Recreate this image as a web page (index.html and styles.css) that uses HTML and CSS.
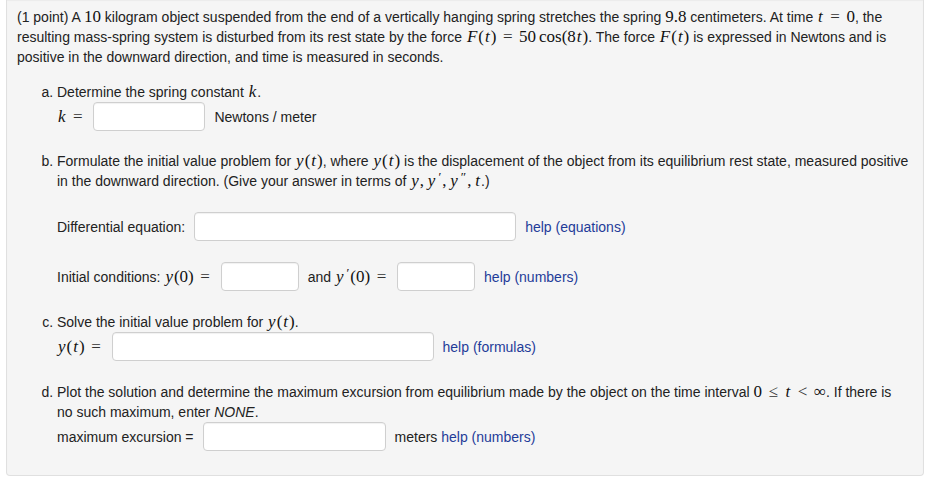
FILE: index.html
```html
<!DOCTYPE html>
<html>
<head>
<meta charset="utf-8">
<link rel="stylesheet" href="styles.css">
</head>
<body>
<div class="well">
  <p class="intro">(1 point) A <span class="m">10</span> kilogram object suspended from the end of a vertically hanging spring stretches the spring <span class="m">9.8</span> centimeters. At time <span class="m"><i>t</i><span class="rel">=</span>0</span>, the resulting mass-spring system is disturbed from its rest state by the force <span class="m"><i>F</i>(<i>t</i>)<span class="rel">=</span>50<span class="fn">cos</span>(8<i>t</i>)</span>. The force <span class="m"><i>F</i>(<i>t</i>)</span> is expressed in Newtons and is positive in the downward direction, and time is measured in seconds.</p>
  <ol class="parts">
    <li class="part part-a">
      <p>Determine the spring constant <span class="m"><i>k</i></span>.</p>
      <div class="row">
        <span class="m"><i>k</i><span class="rel rel-end">=</span></span>
        <input class="ans ans-k" type="text">
        <span>Newtons / meter</span>
      </div>
    </li>
    <li class="part part-b">
      <p>Formulate the initial value problem for <span class="m"><i>y</i>(<i>t</i>)</span>, where <span class="m"><i>y</i>(<i>t</i>)</span> is the displacement of the object from its equilibrium rest state, measured positive in the downward direction. (Give your answer in terms of <span class="m"><i>y</i>,<span class="thin"></span><i>y</i><span class="pr">′</span>,<span class="thin"></span><i>y</i><span class="pr">″</span>,<span class="thin"></span><i>t</i></span>.)</p>
      <div class="row row-gap">
        <span>Differential equation:</span>
        <input class="ans ans-wide" type="text">
        <a href="#">help (equations)</a>
      </div>
      <div class="row row-gap">
        <span>Initial conditions: <span class="m"><i>y</i>(0)<span class="rel rel-end">=</span></span></span>
        <input class="ans ans-s" type="text">
        <span>and <span class="m"><i>y</i><span class="pr">′</span>(0)<span class="rel rel-end">=</span></span></span>
        <input class="ans ans-s" type="text">
        <a href="#">help (numbers)</a>
      </div>
    </li>
    <li class="part part-c">
      <p>Solve the initial value problem for <span class="m"><i>y</i>(<i>t</i>)</span>.</p>
      <div class="row">
        <span class="m"><i>y</i>(<i>t</i>)<span class="rel rel-end">=</span></span>
        <input class="ans ans-wide" type="text">
        <a href="#">help (formulas)</a>
      </div>
    </li>
    <li class="part part-d">
      <p>Plot the solution and determine the maximum excursion from equilibrium made by the object on the time interval <span class="m">0<span class="rel">≤</span><i>t</i><span class="rel">&lt;</span>∞</span>. If there is<br>no such maximum, enter <em>NONE</em>.</p>
      <div class="row">
        <span>maximum excursion =</span>
        <input class="ans ans-m" type="text">
        <span>meters <a href="#">help (numbers)</a></span>
      </div>
    </li>
  </ol>
</div>
</body>
</html>
```

FILE: styles.css
```css
html, body {
  margin: 0;
  padding: 0;
  background: #fff;
}

body {
  font-family: "Liberation Sans", Arial, sans-serif;
  font-size: 14px;
  line-height: 20px;
  color: #222;
}

.well {
  margin: 0 13px 0 6px;
  background: #f5f5f5;
  border: 1px solid #e0e0e0;
  border-top: none;
  border-radius: 0 0 4px 4px;
  padding: 7px 12px 24px 10px;
  box-shadow: inset 0 1px 1px rgba(0, 0, 0, 0.04);
}

p {
  margin: 0;
}

.intro {
  margin-bottom: 15px;
}

.parts {
  margin: 0;
  padding-left: 40px;
  list-style-type: lower-alpha;
}

.part-a { margin-bottom: 20px; }
.part-b { margin-bottom: 21px; }
.part-c { margin-bottom: 21px; }

.row {
  display: flex;
  align-items: center;
  gap: 9px;
  white-space: nowrap;
}

.row-gap {
  margin-top: 21px;
}

.m {
  font-family: "Liberation Serif", "DejaVu Serif", serif;
  font-size: 17px;
  line-height: 1;
  color: #111;
  white-space: nowrap;
}

.m i {
  font-style: italic;
  padding: 0 1px;
}

.fn {
  margin-left: 3px;
}

.rel {
  display: inline-block;
  width: 0.778em;
  text-align: center;
  margin: 0 4.7px;
  color: #333;
}

.rel-end {
  margin-right: 0;
}

.thin {
  display: inline-block;
  width: 2.8px;
}

.pr {
  position: relative;
  top: -5px;
  font-size: 13px;
  margin-left: 2px;
  margin-right: 1px;
}

.ans {
  box-sizing: border-box;
  height: 29px;
  margin: 0;
  padding: 4px 6px;
  background: #fff;
  border: 1px solid #cfcfcf;
  border-radius: 4px;
  box-shadow: inset 0 1px 1px rgba(0, 0, 0, 0.06);
  font-family: inherit;
  font-size: 14px;
}

.ans-k { width: 112px; }
.ans-s { width: 78px; }
.ans-wide { width: 322px; }
.ans-m { width: 183px; }

a {
  color: #1f3c99;
  text-decoration: none;
}

em {
  font-style: italic;
}
```
